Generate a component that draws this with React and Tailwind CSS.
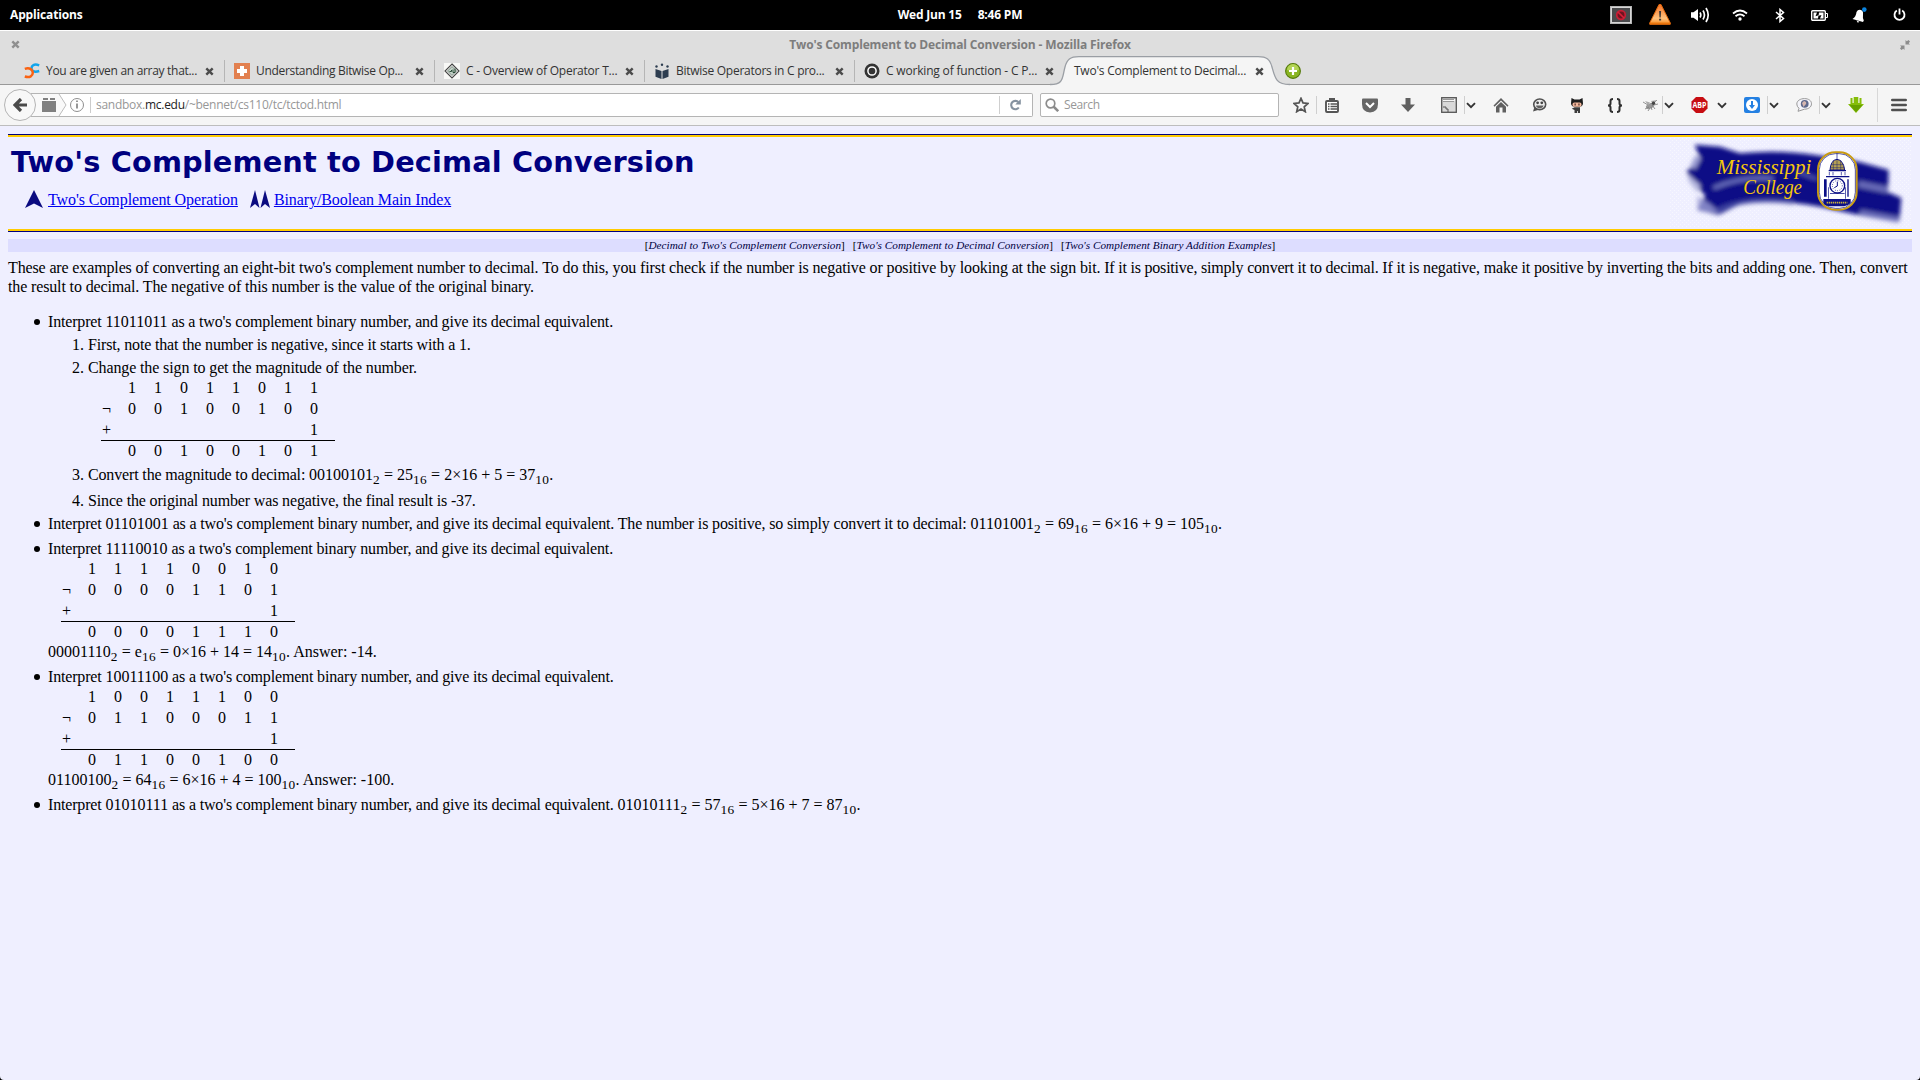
const UI = "font-['Open_Sans',sans-serif]";
const SERIF = "font-['Liberation_Serif',serif]";

function Slot({ left = "", w, children }) {
  return (
    <div className={`flex h-full shrink-0 items-center justify-center ${left} ${w}`}>{children}</div>
  );
}

function CloseX({ color = "#4c4c4c" }) {
  return (
    <svg width="9" height="9" viewBox="0 0 9 9" className="shrink-0">
      <path d="M1.3 1.3 7.7 7.7 M7.7 1.3 1.3 7.7" stroke={color} strokeWidth="2.4" />
    </svg>
  );
}

function TopBar() {
  return (
    <div className={`flex h-[30px] items-center justify-between bg-black px-[10px] text-[12px] font-bold text-white ${UI}`}>
      <div className="w-[400px] tracking-[-0.15px]">Applications</div>
      <div className="flex gap-[16px] whitespace-nowrap tracking-[-0.2px]">
        <span>Wed Jun 15</span>
        <span>8:46 PM</span>
      </div>
      <div className="flex h-full w-[400px] items-center justify-end">
        <Slot w="w-[40px]">
          <svg width="22" height="18" viewBox="0 0 22 18" className="ml-[2px]">
            <rect x=".5" y=".5" width="21" height="17" fill="#4a4a4c" stroke="#b5b5b5" />
            <rect x="1.5" y="1.5" width="19" height="15" fill="none" stroke="#d5d5d5" />
            <circle cx="11" cy="9" r="4.3" fill="#6e1420" stroke="#c81e35" strokeWidth="1.7" />
            <path d="m8 6 6 6" stroke="#d8203a" strokeWidth="1.7" />
          </svg>
        </Slot>
        <Slot w="w-[40px]">
          <svg width="22" height="22" viewBox="0 0 22 22" className="mb-[3px]">
            <defs>
              <linearGradient id="warn" x1="0" y1="0" x2="0" y2="1">
                <stop offset="0" stopColor="#f37329" />
                <stop offset=".7" stopColor="#ffc27d" />
                <stop offset="1" stopColor="#f58a1f" />
              </linearGradient>
            </defs>
            <path d="M10 1.5h2L21.3 20v1.3H.7V20z" fill="url(#warn)" stroke="#e0670b" strokeLinejoin="round" />
            <path d="M1 20.4h20" stroke="#e8740c" strokeWidth="1.6" />
            <path d="M10.1 8h2l-.4 6.5h-1.2zM10.1 15.8h2v1.8h-2z" fill="#3a3a3a" />
          </svg>
        </Slot>
        <Slot w="w-[40px]">
          <svg width="20" height="16" viewBox="0 0 20 16" fill="none" stroke="#fff" strokeWidth="1.7" className="ml-px">
            <path d="M1 5.3h2.500L8 2v12l-4.500-3.300H1z" fill="#fff" stroke="none" />
            <path d="M10 5.500q1.600 2.500 0 5M13 3.500q2.900 4.500 0 9M16 1q4.400 7 0 14" />
          </svg>
        </Slot>
        <Slot w="w-[40px]">
          <svg width="16" height="12" viewBox="0 0 16 12" fill="none" stroke="#fff" strokeWidth="1.8">
            <path d="M1 4.500q7-6 14 0M3.500 7.300q4.500-3.800 9 0" />
            <circle cx="8" cy="10" r="1.700" fill="#fff" stroke="none" />
          </svg>
        </Slot>
        <Slot w="w-[40px]">
          <svg width="10" height="15" viewBox="0 0 10 15" fill="none" stroke="#fff" strokeWidth="1.500">
            <path d="m1 4 7.500 6.500L5 13.500v-12l3.500 3L1 11" />
          </svg>
        </Slot>
        <Slot w="w-[40px]">
          <svg width="17" height="11" viewBox="0 0 17 11">
            <rect x=".7" y=".7" width="13.600" height="9.600" rx="1" fill="none" stroke="#fff" strokeWidth="1.400" />
            <path d="M15 3.500h1.500v4H15" fill="none" stroke="#fff" />
            <path d="M2.500 2.500h3.500L4.500 6.300l3-1-.5 3.200H2.500zM8 2.500h4.500v6H9l1.500-3.500-3 .8z" fill="#fff" />
          </svg>
        </Slot>
        <Slot w="w-[40px]">
          <svg width="16" height="16" viewBox="0 0 16 16" className="mr-[2px]">
            <path d="M1.500 12q3.500-2 4-7Q7 2 10 3q2.500 1 2 4-.5 4 .8 6.500L12 15zM5.500 13.500l3 1.200-1.700 1z" fill="#fff" />
            <circle cx="13.300" cy="2.600" r="2.300" fill="#0a84e0" />
          </svg>
        </Slot>
        <Slot w="w-[40px]" left="-mr-[10px]">
          <svg width="13" height="14" viewBox="0 0 13 14" fill="none" stroke="#fff" strokeWidth="1.800">
            <path d="M3.800 2.600a5 5 0 1 0 5.400 0M6.500 .5v6" />
          </svg>
        </Slot>
      </div>
    </div>
  );
}

const favicons = {
  careercup: (
    <svg width="16" height="16" viewBox="0 0 16 16" fill="none" strokeWidth="2.500">
      <path d="M15.200 2.300C10 .4 7.500 2.500 7.500 5.200S10 9.600 15.200 8" stroke="#12a5ec" />
      <path d="M.8 5.900C6 4.200 8.800 7 8.800 9.800S6 15.200.8 13.500" stroke="#fa6212" />
    </svg>
  ),
  cross: (
    <svg width="16" height="16" viewBox="0 0 16 16">
      <rect width="16" height="16" fill="#e2804f" />
      <path d="M6 3h4v3h3v4h-3v3H6v-3H3V6h3z" fill="#fff" />
    </svg>
  ),
  diamond: (
    <svg width="16" height="16" viewBox="0 0 16 16">
      <rect width="16" height="16" fill="#f8f8f6" />
      <path d="m8 1 7 7-7 7-7-7z" fill="none" stroke="#444" strokeWidth="1.100" />
      <path d="m8 3.500 4.500 4.500L8 12.500 3.500 8z" fill="#c3d2c8" stroke="#5d6e64" strokeWidth=".8" />
      <path d="M5.500 8.500h2V7M9 6.500v3h2v-4" fill="none" stroke="#264a35" />
    </svg>
  ),
  book: (
    <svg width="16" height="16" viewBox="0 0 16 16" fill="#2d3d50">
      <circle cx="2.500" cy="3.500" r="1.200" />
      <circle cx="8" cy="1.700" r="1.200" />
      <circle cx="13.500" cy="3.500" r="1.200" />
      <path d="m1.500 6 6 2v8l-6-2.200zM14.500 6l-6 2v8l6-2.200z" />
    </svg>
  ),
  ring: (
    <svg width="16" height="16" viewBox="0 0 16 16">
      <circle cx="8" cy="8" r="7.500" fill="#333" />
      <circle cx="8" cy="8" r="4.100" fill="#333" stroke="#fff" strokeWidth="1.500" />
    </svg>
  ),
};

const tabs = [
  ["careercup", "You are given an array that...", "tracking-[-0.3px]"],
  ["cross", "Understanding Bitwise Op...", "tracking-[-0.32px]"],
  ["diamond", "C - Overview of Operator T...", "tracking-[-0.22px]"],
  ["book", "Bitwise Operators in C pro...", "tracking-[-0.27px]"],
  ["ring", "C working of function - C P...", "tracking-[-0.18px]"],
];

function WindowHeader() {
  return (
    <div className={`flex h-[55px] flex-col border-t border-white bg-[#dedede] ${UI}`}>
      <div className="flex h-[25px] items-center justify-between pt-[2px] pr-[10px] pl-[11px]">
        <CloseX color="#8f8f8f" />
        <div className="text-[12px] font-bold tracking-[-0.145px] text-[#7d7d7d]">Two's Complement to Decimal Conversion - Mozilla Firefox</div>
        <svg width="10" height="10" viewBox="0 0 10 10" fill="#8c8c8c">
          <path d="M5.500 0v4.500H10L8.700 3.200 10 1.500 8.500 0 6.800 1.300zM4.500 10V5.500H0l1.300 1.300L0 8.500 1.500 10l1.700-1.300z" />
        </svg>
      </div>
      <div className="flex h-[29px] border-b border-[#999] pl-[15px] text-[12px] text-[#333]">
        {tabs.map(([icon, label, tracking], i) => (
          <div key={icon} className="flex w-[210px] items-center pt-[2px] pl-[9px]">
            <div className="w-[22px] shrink-0">{favicons[icon]}</div>
            <div className={`w-[159px] whitespace-nowrap ${tracking}`}>{label}</div>
            <CloseX />
            <div className={i < 4 ? "ml-auto h-[22px] w-px bg-[#b5b5b5]" : "hidden"} />
          </div>
        ))}
        <div className="relative flex w-[210px] items-center pt-[2px] pl-[9px]">
          <svg width="258" height="30" viewBox="0 0 258 30" className="absolute top-0 -left-[15px]">
            <path d="M0 28.500C14 28.500 12 22 15 11 17 3.500 20 .7 29 .7H208C217 .7 220 3.500 222 11 225 22 226 28.500 240 28.500V30H0z" fill="#f5f5f5" />
            <path d="M0 28.500C14 28.500 12 22 15 11 17 3.500 20 .7 29 .7H208C217 .7 220 3.500 222 11 225 22 226 28.500 240 28.500" fill="none" stroke="#9a9ea4" strokeWidth="1.300" />
          </svg>
          <div className="relative w-[181px] whitespace-nowrap tracking-[-0.24px]">Two's Complement to Decimal...</div>
          <div className="relative flex"><CloseX /></div>
        </div>
        <div className="relative flex items-center pt-[2px] pl-[10px]">
          <svg width="16" height="16" viewBox="0 0 16 16">
            <circle cx="8" cy="8" r="7.400" fill="#8ab522" stroke="#557a0c" strokeWidth="1.100" />
            <path d="M2 7a6 6 0 0 1 12 0q-6 2-12 0" fill="#b3d455" />
            <path d="M8 4v8M4 8h8" stroke="#fff" strokeWidth="2.200" />
          </svg>
        </div>
      </div>
    </div>
  );
}

function Chevron() {
  return (
    <svg width="10" height="7" viewBox="0 0 10 7" className="shrink-0">
      <path d="m1 1.200 4 4 4-4" fill="none" stroke="#333" strokeWidth="1.900" />
    </svg>
  );
}

const Sep = () => <div className="h-[18px] w-px shrink-0 bg-[#cfcfcf]" />;

function NavBar() {
  return (
    <div className={`flex h-[41px] items-center border-b border-[#bdbdbd] bg-[#f5f5f5] text-[12px] ${UI}`}>
      <div className="relative ml-[4px] flex h-[32px] w-[32px] shrink-0 items-center justify-center rounded-full border border-[#b4b4b4] bg-[#f8f8f8]">
        <svg width="14" height="14" viewBox="0 0 14 14">
          <path d="M8 1 2 7l6 6M2.500 7H14" fill="none" stroke="#4a4a4a" strokeWidth="3.200" />
        </svg>
      </div>
      <div className="-ml-[5px] flex h-[24px] w-[1002px] shrink-0 items-center rounded-r-[2px] border border-l-0 border-[#b4b4b4] bg-white">
        <svg width="57" height="22" viewBox="0 0 57 22" className="shrink-0">
          <path d="M0 0H28l7 11-7 11H0Q8 11 0 0" fill="#f9f9f9" />
          <path d="m28 0 7 11-7 11" fill="none" stroke="#bbb" />
          <path d="M11 7h14v11H11zM12 4h5v2h-5zM19 4h5v2h-5z" fill="#808080" />
          <circle cx="46" cy="11" r="6.500" fill="none" stroke="#8f8f8f" />
          <path d="M46 9.500v5M46 6.500v1.600" stroke="#858585" strokeWidth="1.700" />
        </svg>
        <div className="ml-[2px] h-[16px] w-px bg-[#ccc]" />
        <div className="ml-[5px] flex-1 whitespace-nowrap tracking-[-0.27px] text-[#979797]">
          sandbox.<span className="text-[#222]">mc.edu</span>/~bennet/cs110/tc/tctod.html
        </div>
        <Sep />
        <div className="flex w-[32px] justify-center pr-[2px]">
          <svg width="12" height="12" viewBox="0 0 12 12">
            <path d="M9.300 3A4.200 4.200 0 1 0 9.800 8.500" fill="none" stroke="#8592a0" strokeWidth="2.100" />
            <path d="M11.800 0v5.500H6.300z" fill="#8592a0" />
          </svg>
        </div>
      </div>
      <div className="ml-[7px] flex h-[24px] w-[239px] shrink-0 items-center rounded-[2px] border border-[#b4b4b4] bg-white pl-[4px] text-[#979797]">
        <svg width="14" height="14" viewBox="0 0 14 14" fill="none" stroke="#8c8c8c">
          <circle cx="5.500" cy="5.500" r="4.300" strokeWidth="1.700" />
          <path d="m8.500 8.500 4.700 4.700" strokeWidth="2.500" />
        </svg>
        <span className="ml-[5px] tracking-[-0.4px]">Search</span>
      </div>
      <div className="flex h-full flex-1 items-center">
        <Slot w="w-[32px]" left="ml-[6px]">
          <svg width="16" height="16" viewBox="0 0 16 16">
            <path d="m8 1.300 2 4.600 5 .5-3.800 3.400 1.100 4.900L8 12.100l-4.300 2.600 1.100-4.900L1 6.400l5-.5z" fill="none" stroke="#555" strokeWidth="1.700" />
          </svg>
        </Slot>
        <Slot w="w-[1px]" left="-ml-[1px]"><Sep /></Slot>
        <Slot w="w-[30px]">
          <svg width="14" height="15" viewBox="0 0 14 15">
            <rect x="1" y="3" width="12" height="11" rx="1" fill="#fff" stroke="#555" strokeWidth="1.900" />
            <path d="M4 0h6v3H4z" fill="#555" />
            <path d="M3 6h1.500M5.500 6H12M3 8.500h1.500M5.500 8.500H12M3 11h1.500M5.500 11H12" stroke="#555" strokeWidth="1.400" />
          </svg>
        </Slot>
        <Slot w="w-[38px]" left="ml-[4px]">
          <svg width="16" height="15" viewBox="0 0 16 15">
            <path d="M1 .5h14q1 0 1 1V6q0 8-8 8.500Q0 14 0 6V1.500q0-1 1-1" fill="#666" />
            <path d="m4 5 4 4 4-4" fill="none" stroke="#fff" strokeWidth="2" />
          </svg>
        </Slot>
        <Slot w="w-[38px]">
          <svg width="14" height="14" viewBox="0 0 14 14"><path d="M4.500 0h5v6.500H14L7 14 0 6.500h4.500z" fill="#606060" /></svg>
        </Slot>
        <Slot w="w-[28px]" left="ml-[8px]">
          <svg width="16" height="16" viewBox="0 0 16 16">
            <rect x=".7" y=".7" width="14.600" height="14.600" fill="#d9d9d9" stroke="#555" strokeWidth="1.300" />
            <path d="M2 2h12v2H2z" fill="#f6f6f6" />
            <path d="M2 2.500h11M2 4.500h11" stroke="#999" />
            <path d="M2 10h3v2h2v3" fill="none" stroke="#555" />
          </svg>
        </Slot>
        <Slot w="w-[1px]" left="ml-[1px]"><Sep /></Slot>
        <Slot w="w-[12px]"><Chevron /></Slot>
        <Slot w="w-[38px]" left="ml-[5px]">
          <svg width="16" height="15" viewBox="0 0 16 15" fill="#606060">
            <path d="M8 0 15.500 7.500 14.500 8.700 8 2.500 1.500 8.700.5 7.500z" />
            <path d="m8 4 5 4.800V14.500H9.500V9.500h-3v5H3V8.800z" />
          </svg>
        </Slot>
        <Slot w="w-[38px]">
          <svg width="15" height="14" viewBox="0 0 15 14">
            <path d="M2.500 9 1 13.500l5-1.500" fill="#505050" />
            <ellipse cx="7.700" cy="6.300" rx="6" ry="5.300" fill="#ededed" stroke="#505050" strokeWidth="1.600" />
            <circle cx="5.600" cy="4.800" r="1.400" fill="#444" />
            <circle cx="9.800" cy="4.800" r="1.400" fill="#444" />
            <path d="M4 7.500h7.500Q11 10.300 7.700 10.300T4 7.500" fill="#606060" />
          </svg>
        </Slot>
        <Slot w="w-[38px]">
          <svg width="12" height="15" viewBox="0 0 12 15">
            <path d="M.5 0 3.500 1.500h5L11.500 0 12 5.500Q12 9 6 9T0 5.500z" fill="#1d1d1d" />
            <rect x="1.500" y="4.500" width="9" height="4.200" rx="1.800" fill="#f2b79b" />
            <path d="M3.500 5.500h1.300v2H3.500zM7.300 5.500h1.300v2H7.300z" fill="#5b3631" />
            <path d="M3.500 9.200h5.500v5.800H6.800v-2H6v2H3.500v-3L.8 10.800z" fill="#3c3c3c" />
          </svg>
        </Slot>
        <Slot w="w-[38px]">
          <svg width="16" height="15" viewBox="0 0 16 15" fill="none" stroke="#2e2e2e" strokeWidth="2">
            <path d="M6 1Q3.500 1 3.500 3v2.500Q3.500 7.500 1 7.500q2.500 0 2.500 2V12q0 2 2.500 2M10 1q2.500 0 2.500 2v2.500q0 2 2.500 2-2.500 0-2.500 2V12q0 2-2.500 2" />
          </svg>
        </Slot>
        <Slot w="w-[26px]" left="ml-[3px]">
          <svg width="15" height="12" viewBox="0 0 15 12">
            <ellipse cx="7" cy="7" rx="4.300" ry="2.600" fill="#999" transform="rotate(-25 7 7)" />
            <path d="M0 3 5 6M2 10l4-2M5 12l2-3M9 11l-1-3M12 10 9 6M10 5l4-4M11 6l4-1" stroke="#777" strokeWidth=".8" />
            <path d="m2 2 5 1.500L5 6zM8 2l6-1-4 4z" fill="#aaa" />
            <circle cx="10.500" cy="4.300" r="1.700" fill="#444" />
          </svg>
        </Slot>
        <Slot w="w-[1px]" left="-ml-[1px]"><Sep /></Slot>
        <Slot w="w-[12px]"><Chevron /></Slot>
        <Slot w="w-[32px]" left="ml-[8px]">
          <svg width="17" height="16" viewBox="0 0 17 16">
            <path d="M5 0h7l4.500 4.500v7L12 16H5L.5 11.500v-7z" fill="#c70d12" />
            <text x="8.500" y="11" textAnchor="middle" textLength="14" lengthAdjust="spacingAndGlyphs" fontSize="8.500" fontWeight="700" fill="#fff" className={UI}>ABP</text>
          </svg>
        </Slot>
        <Slot w="w-[14px]"><Chevron /></Slot>
        <Slot w="w-[32px]" left="ml-[7px]">
          <svg width="16" height="16" viewBox="0 0 16 16">
            <rect width="16" height="16" rx="2" fill="#2480e2" />
            <circle cx="8" cy="8" r="6" fill="#fff" />
            <path d="M7 4h2v4h2l-3 4-3-4h2z" fill="#2480e2" />
          </svg>
        </Slot>
        <Slot w="w-[1px]" left="-ml-[1px]"><Sep /></Slot>
        <Slot w="w-[12px]"><Chevron /></Slot>
        <Slot w="w-[32px]" left="ml-[8px]">
          <svg width="16" height="14" viewBox="0 0 16 14">
            <path d="M8.500 .6c4 0 7 2 7 5.200s-3 5.400-7 5.400L2 13.300l1-3Q.8 8.500.8 6C.8 2.600 4.500.6 8.500.6" fill="#f4f4fa" stroke="#999" />
            <circle cx="8.700" cy="5.800" r="3.900" fill="#5d688c" />
            <path d="M8 3q3 1 2 3L7.500 9 6 5z" fill="#d5b6b0" />
          </svg>
        </Slot>
        <Slot w="w-[1px]" left="-ml-[1px]"><Sep /></Slot>
        <Slot w="w-[12px]"><Chevron /></Slot>
        <Slot w="w-[30px]" left="ml-[9px]">
          <svg width="16" height="16" viewBox="0 0 16 16">
            <path d="M2.500 1h2v5h1.200V0h4.600v6h1.200V1h2v6H16l-8 9-8-9h2.500z" fill="#85bd08" />
            <path d="M1.500 8h13L8 15z" fill="#67a000" />
          </svg>
        </Slot>
        <div className="ml-[6px] h-[34px] w-px bg-[#d8d8d8]" />
        <Slot w="w-[42px]">
          <svg width="16" height="14" viewBox="0 0 16 14" stroke="#505050" strokeWidth="2.600" strokeLinecap="round">
            <path d="M1.300 2h13.400M1.300 7h13.400M1.300 12h13.400" />
          </svg>
        </Slot>
      </div>
    </div>
  );
}

function CollegeLogo() {
  return (
    <svg width="252" height="91" viewBox="0 39 756 273" className="shrink-0">
      <defs>
        <filter id="soft" x="-10%" y="-20%" width="120%" height="140%"><feGaussianBlur stdDeviation="6.500" /></filter>
        <pattern id="dots" width="12" height="12" patternUnits="userSpaceOnUse">
          <path d="M0 0h3v3H0zM6 6h3v3H6z" fill="#fff" fillOpacity=".5" />
        </pattern>
      </defs>
      <rect x="28" y="39" width="728" height="273" fill="url(#dots)" />
      <g filter="url(#soft)">
        <path d="M104 62 180 68 240 88Q360 76 470 94L590 112 686 138 684 205 724 222 718 292 600 274 480 248Q330 222 240 240L176 272 112 258 136 214 96 175 80 142 122 106z" fill="#0b0f86" />
        <path d="M82 148 122 185 112 205 86 172z" fill="#b5b7df" />
        <path d="M112 215 150 240 180 266 140 264 112 258z" fill="#9d9fd4" opacity=".8" />
        <path d="M115 98 98 132" stroke="#9a9cd2" strokeWidth="18" />
        <path d="M170 262Q250 218 400 236" fill="none" stroke="#6668b6" strokeWidth="14" opacity=".6" />
        <path d="M160 192Q250 155 340 164" fill="none" stroke="#8084c8" strokeWidth="12" opacity=".8" />
        <path d="M595 180 684 198M600 266 716 288" stroke="#8f91cc" strokeWidth="20" opacity=".7" />
        <path d="M415 145 470 165" stroke="#6d71bf" strokeWidth="8" opacity=".8" />
      </g>
      <g fill="#f5c60c" className={SERIF} fontStyle="italic">
        <text x="170" y="151" fontSize="60" textLength="284" lengthAdjust="spacingAndGlyphs">Mississippi</text>
        <text x="250" y="211" fontSize="60" textLength="176" lengthAdjust="spacingAndGlyphs">College</text>
      </g>
      <rect x="474" y="85" width="116" height="172" rx="52" fill="#fff" stroke="#c89b12" strokeWidth="6" />
      <rect x="478" y="89" width="108" height="164" rx="48" fill="none" stroke="#0b0f86" strokeWidth="2" />
      <g fill="#0b0f86">
        <path d="M530 88h2v20h-2z" />
        <path d="M510 138Q512 108 531 106 550 108 554 138z" fill="#b5a052" stroke="#0b0f86" strokeWidth="3" />
        <path d="M520 108v30M531 106v32M542 108v30M513 122h38M511 131h42" stroke="#1d2170" strokeWidth="1.500" />
        <path d="M506 138h52v4h-52zM498 156h70v4h-70zM492 166h8v52h-8zM562 166h4v52h-4z" />
        <path d="M508 144v10M519 144v10M544 144v10M555 144v10" stroke="#0b0f86" strokeWidth="2" />
        <circle cx="532" cy="185" r="22" fill="#fff" stroke="#0b0f86" strokeWidth="4" />
        <circle cx="532" cy="185" r="15" fill="none" stroke="#0b0f86" strokeWidth="3" strokeDasharray="2 5" />
        <path d="M532 173v13l-9 5" fill="none" stroke="#0b0f86" strokeWidth="3" />
        <path d="M510 208h44v2h-44zM504 190h2v34h-2zM556 190h2v34h-2zM490 225h82v12q-10 10-20 10h-42q-14 0-20-10z" />
      </g>
      <path d="M500 236h62" stroke="#c9b03a" strokeWidth="5" strokeDasharray="4 2" />
    </svg>
  );
}

function Arithmetic({ rows }) {
  return (
    <div className="mt-px ml-[13px] w-[234px] leading-[19px]">
      {rows.map((row, i) => (
        <div
          key={i}
          className={`grid grid-cols-9 ${i < 2 ? "h-[21px]" : "h-[20px]"} ${i === 3 ? "box-content border-t border-black" : ""}`}
        >
          {row.split("").map((c, j) => (
            <span key={j} className="pl-px whitespace-pre">{c}</span>
          ))}
        </div>
      ))}
    </div>
  );
}

function Bullet({ gap = "", children }) {
  return (
    <li className={`flex ${gap}`}>
      <span className="mt-[7px] mr-[8px] ml-[26px] h-[6px] w-[6px] shrink-0 rounded-full bg-black" />
      <div>{children}</div>
    </li>
  );
}

function Step({ n, gap, children }) {
  return (
    <li className={`flex ${gap}`}>
      <span className="w-[16px] shrink-0">{n}.</span>
      <div>{children}</div>
    </li>
  );
}

const Line = ({ children }) => <div className="h-[19px] whitespace-nowrap">{children}</div>;
const Prose = ({ children }) => <span className="tracking-[-0.15px]">{children}</span>;
const Sub = ({ children }) => (
  <span className="relative top-[4px] text-[13.333px] leading-none tracking-[0.33px]">{children}</span>
);
const Ask = ({ n }) => (
  <>
    <span className="tracking-[-0.17px]">Interpret </span>
    {n}
    <span className="tracking-[-0.163px]"> as a two's complement binary number, and give its decimal equivalent.</span>
  </>
);

function Page() {
  return (
    <div className={`flex-1 rounded-b-[4px] bg-[#efefff] px-[8px] pt-[8px] text-[16px] leading-[19px] text-black ${SERIF}`}>
      <div className="flex h-[98px] justify-between border-y border-[#00007f]">
        <div className="flex flex-1 justify-between border-y-2 border-[#ffcc00]">
          <div className="pl-[3px]">
            <h1 className="mt-[7px] h-[36px] font-['DejaVu_Sans',sans-serif] text-[28.8px] leading-[36px] font-bold tracking-[0.145px] whitespace-nowrap text-[#00007f]">
              Two's Complement to Decimal Conversion
            </h1>
            <div className="mt-[10px] flex pl-[14px] text-[#0000ee]">
              <svg width="18" height="18" viewBox="0 0 18 18"><path d="M9 0 18 18 9 13.500 0 18z" fill="#0a0a80" /></svg>
              <a className="ml-[5px] tracking-[-0.08px] underline">Two's Complement Operation</a>
              <svg width="20" height="18" viewBox="0 0 20 18" className="ml-[12px]">
                <path d="M5 0 9.500 18 5 14 0 18zM15 0 20 18 15 14 10.500 18z" fill="#0a0a80" />
              </svg>
              <a className="ml-[4px] tracking-[-0.09px] underline">Binary/Boolean Main Index</a>
            </div>
          </div>
          <CollegeLogo />
        </div>
      </div>
      <div className="mt-[7px] flex h-[13px] justify-center gap-[8px] bg-[#ddddff] text-[11.2px] leading-[13px] tracking-[0.04px]">
        <span>[<i className="text-[#000040]">Decimal to Two's Complement Conversion</i>]</span>
        <span>[<i className="text-[#000040]">Two's Complement to Decimal Conversion</i>]</span>
        <span>[<i className="text-[#000040]">Two's Complement Binary Addition Examples</i>]</span>
      </div>
      <p className="mt-[6px] tracking-[-0.135px]">
        <span className="block whitespace-nowrap">
          <span className="tracking-[-0.136px]">These are examples of converting an eight-bit two's complement number to decimal. </span>
          <span className="tracking-[-0.122px]">To do this, you first check if the number is negative or positive by looking at the sign bit. </span>
          <span className="tracking-[-0.212px]">If it is positive, simply convert it to decimal. </span>
          <span className="tracking-[-0.157px]">If it is negative, make it positive by inverting the bits and adding one. </span>
          <span className="tracking-[-0.05px]">Then, convert</span>
        </span>{" "}
        <span className="block">the result to decimal. The negative of this number is the value of the original binary.</span>
      </p>
      <ul className="mt-[16px]">
        <Bullet>
          <Line><Ask n="11011011" /></Line>
          <ol className="pl-[24px]">
            <Step n={1} gap="mt-[4px]">
              <Line><span className="tracking-[-0.16px]">First, note that the number is negative, since it starts with a 1.</span></Line>
            </Step>
            <Step n={2} gap="mt-[4px]">
              <Line><span className="tracking-[-0.12px]">Change the sign to get the magnitude of the number.</span></Line>
              <Arithmetic rows={[" 11011011", "¬00100100", "+       1", " 00100101"]} />
            </Step>
            <Step n={3} gap="mt-[4px]">
              <Line><Prose>Convert the magnitude to decimal: </Prose>00100101<Sub>2</Sub> = 25<Sub>16</Sub> = 2×16 + 5 = 37<Sub>10</Sub>.</Line>
            </Step>
            <Step n={4} gap="mt-[7px]">
              <Line><Prose>Since the original number was negative, the final result is -37.</Prose></Line>
            </Step>
          </ol>
        </Bullet>
        <Bullet gap="mt-[4px]">
          <Line><Ask n="01101001" /><Prose> The number is positive, so simply convert it to decimal: </Prose>01101001<Sub>2</Sub> = 69<Sub>16</Sub> = 6×16 + 9 = 105<Sub>10</Sub>.</Line>
        </Bullet>
        <Bullet gap="mt-[6px]">
          <Line><Ask n="11110010" /></Line>
          <Arithmetic rows={[" 11110010", "¬00001101", "+       1", " 00001110"]} />
          <Line>00001110<Sub>2</Sub> = e<Sub>16</Sub> = 0×16 + 14 = 14<Sub>10</Sub>. Answer: -14.</Line>
        </Bullet>
        <Bullet gap="mt-[6px]">
          <Line><Ask n="10011100" /></Line>
          <Arithmetic rows={[" 10011100", "¬01100011", "+       1", " 01100100"]} />
          <Line>01100100<Sub>2</Sub> = 64<Sub>16</Sub> = 6×16 + 4 = 100<Sub>10</Sub>. Answer: -100.</Line>
        </Bullet>
        <Bullet gap="mt-[6px]">
          <Line><Ask n="01010111" /> 01010111<Sub>2</Sub> = 57<Sub>16</Sub> = 5×16 + 7 = 87<Sub>10</Sub>.</Line>
        </Bullet>
      </ul>
    </div>
  );
}

export default function App() {
  return (
    <div className="flex h-[1080px] w-[1920px] flex-col overflow-hidden bg-black">
      <TopBar />
      <WindowHeader />
      <NavBar />
      <Page />
    </div>
  );
}
